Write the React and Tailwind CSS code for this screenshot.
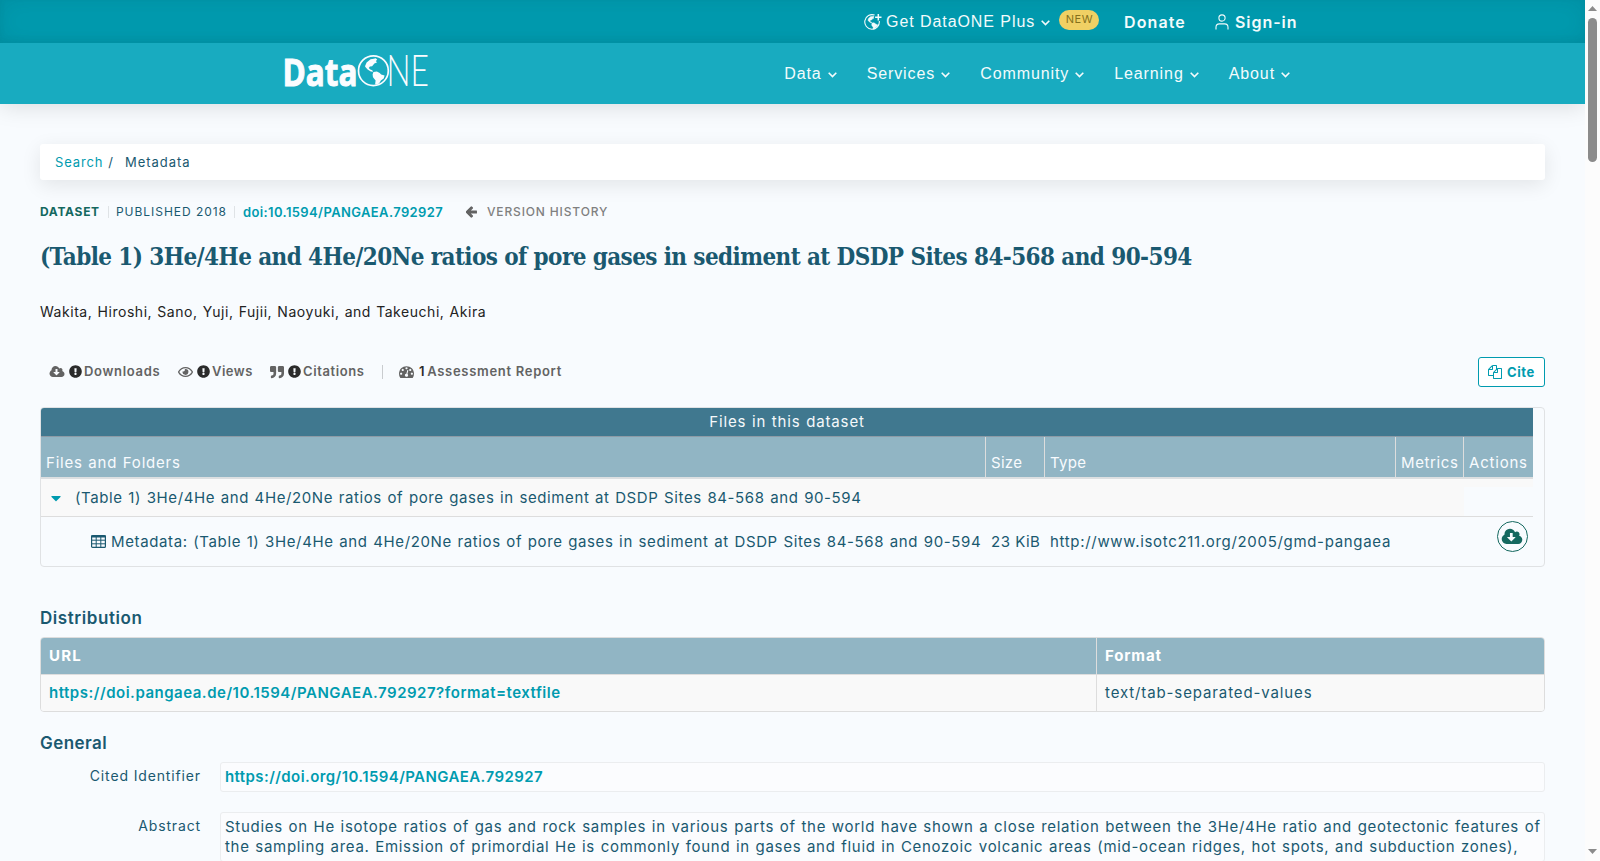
import {
  FaArrowLeft,
  FaCaretDown,
  FaExclamationCircle,
  FaQuoteRight,
  FaRegEye,
} from 'react-icons/fa'

const TITLE =
  '(Table 1) 3He/4He and 4He/20Ne ratios of pore gases in sediment at DSDP Sites 84-568 and 90-594'

const navItems = ['Data', 'Services', 'Community', 'Learning', 'About']

function Chevron() {
  return (
    <svg viewBox="0 0 9 6" className="mt-[3px] h-[6px] w-[9px]" fill="none" stroke="currentColor" strokeWidth="1.6">
      <path d="M.7.8 4.5 4.6 8.3.8" />
    </svg>
  )
}

function CloudDownload({ className }) {
  return (
    <svg viewBox="0 0 2048 1792" className={className} fill="currentColor">
      <path d="M1344 928q0-14-9-23t-23-9h-224v-352q0-13-9.5-22.5t-22.5-9.5h-192q-13 0-22.5 9.5t-9.5 22.5v352h-224q-13 0-22.5 9.5t-9.5 22.5q0 14 9 23l352 352q9 9 23 9t23-9l351-351q10-12 10-24zm640 224q0 159-112.5 271.5t-271.5 112.5h-1088q-185 0-316.5-131.5t-131.5-316.5q0-130 70-240t188-165q-2-30-2-43 0-212 150-362t362-150q156 0 285.5 87t188.5 231q71-62 166-62 106 0 181 75t75 181q0 76-41 138 130 31 213.5 135.5t83.5 238.5z" />
    </svg>
  )
}

function Dashboard({ className }) {
  return (
    <svg viewBox="0 0 1792 1792" className={className} fill="currentColor">
      <path d="M384 1152q0-53-37.5-90.5t-90.5-37.5-90.5 37.5-37.5 90.5 37.5 90.5 90.5 37.5 90.5-37.5 37.5-90.5zm192-448q0-53-37.5-90.5t-90.5-37.5-90.5 37.5-37.5 90.5 37.5 90.5 90.5 37.5 90.5-37.5 37.5-90.5zm428 481l101-382q6-26-7.5-48.5t-38.5-29.5-48 6.5-30 39.5l-101 382q-60 5-107 43.5t-63 98.5q-20 77 20 146t117 89 146-20 89-117q16-60-6-117t-72-91zm660-33q0-53-37.5-90.5t-90.5-37.5-90.5 37.5-37.5 90.5 37.5 90.5 90.5 37.5 90.5-37.5 37.5-90.5zm-640-640q0-53-37.5-90.5t-90.5-37.5-90.5 37.5-37.5 90.5 37.5 90.5 90.5 37.5 90.5-37.5 37.5-90.5zm448 192q0-53-37.5-90.5t-90.5-37.5-90.5 37.5-37.5 90.5 37.5 90.5 90.5 37.5 90.5-37.5 37.5-90.5zm320 448q0 261-141 483-19 29-54 29h-1402q-35 0-54-29-141-221-141-483 0-182 71-348t191-286 286-191 348-71 348 71 286 191 191 286 71 348z" />
    </svg>
  )
}

function Files({ className }) {
  return (
    <svg viewBox="0 0 1792 1792" className={className} fill="currentColor">
      <path d="M1696 384q40 0 68 28t28 68v1216q0 40-28 68t-68 28h-960q-40 0-68-28t-28-68v-288h-544q-40 0-68-28t-28-68v-672q0-40 20-88t48-76l408-408q28-28 76-48t88-20h416q40 0 68 28t28 68v328q68-40 128-40h416zm-544 213l-299 299h299v-299zm-640-384l-299 299h299v-299zm196 647l316-316v-416h-384v416q0 40-28 68t-68 28h-416v640h512v-256q0-40 20-88t48-76zm956 804v-1152h-384v416q0 40-28 68t-68 28h-416v640h896z" />
    </svg>
  )
}

// Americas on a globe, drawn on a 32 unit circle
function Land() {
  return (
    <>
      <path d="M7 11.5 8.6 7.6l4-3.2 3.2-.4 1.8-.6 1.6 1.2-1.4 1.8 1.4 1-2.8 1.4-2.3 2.6-2.2.3-1.1 1.5 1.5 1.6 2 .7.8 1.4-2.3-.2-3.2-2-2.2-2.6z" fill="currentColor" />
      <path d="m15.4 17.2 3.5-.5 2.8 1.5 1.4 1.4 3.5 1.2-.9 3-2.8 2-1.8 3-2.9 1.1-1.1-.4.5-3.8-2.6-3.2-.4-2.9z" fill="currentColor" />
    </>
  )
}

function Logo() {
  return (
    <svg viewBox="-4 -4.5 155 61" className="h-[61px] w-[155px]" fill="#fafcff" color="#fafcff">
      <text x="-1.5" y="38.5" fontFamily="Open Sans, sans-serif" fontWeight="700" fontSize="38" textLength="75" lengthAdjust="spacingAndGlyphs" stroke="#fafcff" strokeWidth="1">
        Data
      </text>
      <circle cx="89.4" cy="23.2" r="14.9" fill="#18abc0" stroke="#fafcff" strokeWidth="1.7" />
      <g transform="translate(74 7.3)">
        <Land />
      </g>
      <text x="102.5" y="38.7" fontFamily="Lato, sans-serif" fontWeight="300" fontSize="44" textLength="42.5" lengthAdjust="spacingAndGlyphs">
        NE
      </text>
    </svg>
  )
}

function GlobePlus() {
  return (
    <svg viewBox="0 0 18 18" className="h-[18px] w-[18px]" fill="none" stroke="currentColor">
      <path d="M10.6 2.1A7.3 7.3 0 1 0 15.3 8" strokeWidth="1.1" />
      <path d="M14.3 1v6.4M11.1 4.2h6.4" strokeWidth="1.5" />
      <g transform="translate(.4 1.4) scale(.5)" stroke="currentColor" strokeWidth=".8">
        <Land />
      </g>
    </svg>
  )
}

function Header() {
  return (
    <header className="font-['Liberation_Sans'] text-base whitespace-nowrap text-[#f3fbfc] shadow-[0_2px_22px_rgba(0,0,0,0.13)]">
      <div className="flex h-[43px] items-center justify-end bg-[#009baf] pr-[289px] shadow-[inset_0_0_24px_rgba(0,60,75,0.13),inset_0_-3px_6px_rgba(0,60,75,0.06)]">
        <div className="flex items-center">
          <GlobePlus />
          <span className="ml-1 w-[155px] tracking-[0.93px]">Get DataONE Plus</span>
          <Chevron />
          <span className="mb-[3px] ml-[9px] flex h-5 w-10 items-center justify-center rounded-full bg-[#f0d064] pb-px pl-px font-['Inter'] text-[11px] tracking-[0.6px] text-[#85711c]">
            NEW
          </span>
        </div>
        <span className="ml-[25px] w-[91px] pt-px font-['Inter'] font-semibold tracking-[1.1px]">Donate</span>
        <svg viewBox="0 0 14 16" className="h-4 w-[14px]" fill="none" stroke="currentColor" strokeWidth="1.1">
          <circle cx="7" cy="4" r="3.1" />
          <path d="M1 15.6v-2.3c0-2 1.4-3.4 3.4-3.4h5.2c2 0 3.4 1.4 3.4 3.4v2.3" />
        </svg>
        <span className="ml-[6px] w-[61px] pt-px font-['Inter'] font-semibold tracking-[0.95px]">Sign-in</span>
      </div>
      <div className="flex h-[61px] items-center justify-between bg-[#18abc0] pl-[280px] pr-[295px]">
        <Logo />
        <nav className="flex gap-[30px]">
          {navItems.map((item) => (
            <a key={item} className="flex items-center gap-[6px] tracking-[0.9px]">
              {item}
              <Chevron />
            </a>
          ))}
        </nav>
      </div>
    </header>
  )
}

function Metric({ icon, label, className }) {
  return (
    <div className={`flex items-center ${className}`}>
      {icon}
      <FaExclamationCircle className="mr-[2px] mb-px ml-[4px] h-[13px] w-[13px] shrink-0 text-[#2b2b2b]" />
      <span>{label}</span>
    </div>
  )
}

function MetricsBar() {
  return (
    <div className="mt-[35px] flex h-[30px] items-center justify-between font-semibold text-[#636363]">
      <div className="flex items-center pl-[9px] text-[13px] tracking-[0.7px]">
        <Metric className="w-[129px]" label="Downloads" icon={<CloudDownload className="mb-px h-[14px] w-[16px]" />} />
        <Metric className="w-[92px] tracking-[0.5px]" label="Views" icon={<FaRegEye className="mb-px h-[14px] w-[15px]" />} />
        <Metric className="w-[112px] tracking-[0.6px]" label="Citations" icon={<FaQuoteRight className="mb-px h-[14px] w-[14px]" />} />
        <span className="mr-4 h-[14px] w-px bg-[#c9cccf]" />
        <Dashboard className="mb-[2px] h-[15px] w-[15px]" />
        <span className="ml-[5px] text-[#2b2b2b]">1</span>
        <span className="ml-[2px] tracking-[0.7px]">Assessment Report</span>
      </div>
      <button className="flex h-[30px] w-[67px] items-center rounded-[3px] border border-[#009baf] bg-white pl-[9px] text-[13px] font-bold tracking-[0.6px] text-[#009baf]">
        <Files className="mr-[5px] h-[14px] w-[14px]" />
        <span className="pt-px">Cite</span>
      </button>
    </div>
  )
}

function FilesTable() {
  return (
    <div className="mt-5 h-[160px] overflow-hidden rounded border border-[#e0e2e4] text-[15px]">
      <div className="w-[1492px]">
        <div className="flex h-[29px] items-center justify-center border-b border-[#8d9ba6] bg-[#40788f] tracking-[0.85px] text-[#f5f9fb] [word-spacing:0.6px]">
          Files in this dataset
        </div>
        <div className="grid h-[42px] grid-cols-[944px_59px_351px_68px_70px] border-b-2 border-[#dcdfe1] bg-[#91b5c4] leading-5 text-[#f8fbfe] *:flex *:items-end *:pb-1 *:pl-[5px]">
          <div className="tracking-[0.79px] [word-spacing:0.6px]">Files and Folders</div>
          <div className="border-l border-[#ddd] tracking-[0.3px]">Size</div>
          <div className="border-l border-[#ddd] tracking-[0.3px]">Type</div>
          <div className="border-l border-[#ddd] tracking-[0.6px]">Metrics</div>
          <div className="border-l border-[#ddd] tracking-[0.8px]">Actions</div>
        </div>
        <div className="flex h-[38px] items-center border-b border-[#ddd] bg-[#f9f9f9]">
          <FaCaretDown className="ml-[8px] h-4 w-[14px] text-[#009baf]" />
          <span className="ml-3 grow pt-px tracking-[0.605px] whitespace-nowrap [word-spacing:0.8px]">{TITLE}</span>
          <span className="mt-2 h-[29px] w-[69px] self-start bg-[#f8fbfe]" />
        </div>
        <div className="grid h-[49px] grid-cols-[950px_59px_346px_1fr] items-center whitespace-nowrap">
          <div className="flex items-center pl-[50px]">
            <svg viewBox="0 0 15 13" className="mr-[5px] h-[13px] w-[15px]" fill="none" stroke="currentColor">
              <rect x=".6" y=".6" width="13.8" height="11.8" rx="1" strokeWidth="1.2" />
              <path d="M0 1.4h15" strokeWidth="2" />
              <path d="M5.2 2v10.5M9.8 2v10.5M1 5.2h13M1 8.8h13" />
            </svg>
            <span className="pt-px tracking-[0.62px] [word-spacing:0.8px]">Metadata: {TITLE}</span>
          </div>
          <div className="pt-px tracking-[0.5px]">23 KiB</div>
          <div className="pt-px tracking-[0.68px]">http://www.isotc211.org/2005/gmd-pangaea</div>
          <div className="flex h-full justify-end pt-1 pr-[5px]">
            <span className="flex h-[31px] w-[31px] items-center justify-center rounded-full border border-[#14685f] pr-px text-[#14685f]">
              <CloudDownload className="h-[20px] w-[22px]" />
            </span>
          </div>
        </div>
      </div>
    </div>
  )
}

function Distribution() {
  return (
    <section>
      <h2 className="mt-10 pt-px text-[17px] leading-5 font-semibold tracking-[0.57px]">Distribution</h2>
      <div className="mt-[9px] grid h-[75px] grid-cols-[1055px_1fr] grid-rows-[37px_36px] overflow-hidden rounded border border-[#ddd] text-[15px] *:flex *:items-center *:px-2">
        <div className="border-b border-[#ddd] bg-[#91b5c4] font-bold tracking-[1.2px] text-white">URL</div>
        <div className="border-b border-l border-[#ddd] bg-[#91b5c4] font-bold tracking-[0.86px] text-white">Format</div>
        <div className="bg-[#f9f9f9] font-semibold tracking-[0.51px] text-[#009baf]">
          https://doi.pangaea.de/10.1594/PANGAEA.792927?format=textfile
        </div>
        <div className="border-l border-[#ddd] bg-[#f9f9f9] tracking-[0.88px]">text/tab-separated-values</div>
      </div>
    </section>
  )
}

function Field({ label, children }) {
  return (
    <div className="mb-5 flex">
      <div className="w-[161px] pt-1 text-right text-sm leading-5 tracking-[0.86px]">{label}</div>
      <div className="ml-[19px] grow rounded-[3px] border border-[#ebedef] bg-[#fbfcfe] py-1 pl-1 text-[15px] leading-5 whitespace-nowrap">
        {children}
      </div>
    </div>
  )
}

function General() {
  return (
    <section>
      <h2 className="mt-5 mb-[9px] pt-px text-[17px] leading-5 font-semibold tracking-[0.45px]">General</h2>
      <Field label="Cited Identifier">
        <a className="font-semibold tracking-[0.41px] text-[#009baf]">https://doi.org/10.1594/PANGAEA.792927</a>
      </Field>
      <Field label="Abstract">
        <p className="tracking-[0.708px] [word-spacing:0.8px]">
          Studies on He isotope ratios of gas and rock samples in various parts of the world have shown a close relation between the 3He/4He ratio and geotectonic features of
        </p>
        <p className="tracking-[0.695px] [word-spacing:0.8px]">
          the sampling area. Emission of primordial He is commonly found in gases and fluid in Cenozoic volcanic areas (mid-ocean ridges, hot spots, and subduction zones),
        </p>
      </Field>
    </section>
  )
}

function Scrollbar() {
  return (
    <div className="flex w-[15px] flex-col items-center bg-[#fcfcfc]">
      <svg viewBox="0 0 9 5" className="mt-[6px] h-[5px] w-[9px]" fill="#8b8b8b">
        <path d="M0 5 4.5 0 9 5z" />
      </svg>
      <div className="mt-[7px] h-[144px] w-[9px] rounded-full bg-[#8b8b8b]" />
      <svg viewBox="0 0 9 5" className="mt-auto mb-[7px] h-[5px] w-[9px]" fill="#8b8b8b">
        <path d="M0 0 4.5 5 9 0z" />
      </svg>
    </div>
  )
}

export default function App() {
  return (
    <div className="flex h-[861px] w-[1600px] overflow-hidden bg-[#f8fbfe] font-['Inter'] text-[#1a5970]">
      <div className="flex w-[1585px] flex-col overflow-hidden">
        <Header />
        <main className="px-10 pt-10">
          <div className="flex h-9 items-center rounded-[3px] bg-white pt-px pl-[15px] text-[13px] shadow-[0_5px_20px_rgba(0,0,0,0.09)]">
            <a className="tracking-[0.86px] text-[#009baf]">Search</a>
            <span className="ml-[5px]">/</span>
            <span className="ml-3 tracking-[0.95px]">Metadata</span>
          </div>

          <div className="mt-[22px] flex h-5 items-center text-xs">
            <span className="w-[68px] font-bold tracking-[0.7px] text-[#14685f]">DATASET</span>
            <span className="h-3 w-px bg-[#dfe3e6]" />
            <span className="ml-[7px] w-[118px] tracking-[0.96px]">PUBLISHED 2018</span>
            <span className="h-3 w-px bg-[#dfe3e6]" />
            <a className="ml-2 w-[223px] pt-px text-[13px] font-semibold tracking-[0.38px] text-[#009baf]">doi:10.1594/PANGAEA.792927</a>
            <FaArrowLeft className="h-3 w-[11px] text-[#636363]" stroke="currentColor" strokeWidth="44" />
            <span className="ml-[10px] font-medium tracking-[0.85px] text-[#808080]">VERSION HISTORY</span>
          </div>

          <h1 className="mt-5 font-['DejaVu_Serif_Condensed'] text-2xl leading-[30px] font-bold tracking-[-0.6px] whitespace-nowrap">
            {TITLE}
          </h1>
          <p className="mt-[30px] text-sm leading-5 tracking-[0.54px] text-[#222] [word-spacing:0.7px]">
            Wakita, Hiroshi, Sano, Yuji, Fujii, Naoyuki, and Takeuchi, Akira
          </p>

          <MetricsBar />
          <FilesTable />
          <Distribution />
          <General />
        </main>
      </div>
      <Scrollbar />
    </div>
  )
}
